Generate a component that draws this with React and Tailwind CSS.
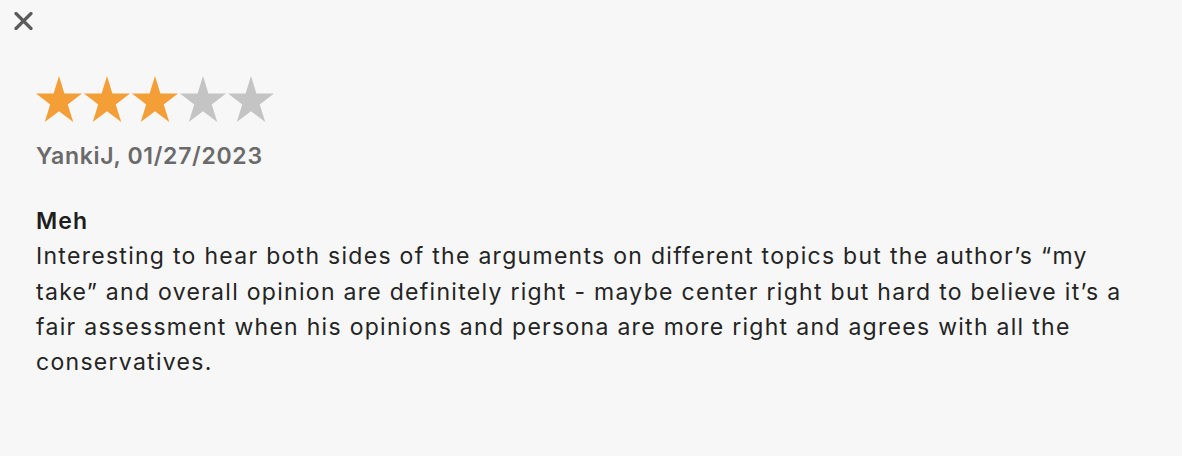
import React from 'react';

// five-point star, drawn in a 46x46 box
const Star = ({ filled }) => (
  <svg width="46" height="46" viewBox="0 0 46 46" className={filled ? 'text-[#f49e38]' : 'text-[#c4c4c4]'}>
    <path
      fill="currentColor"
      d="M23 0 L28.43 17.57 L46 17.57 L31.78 28.43 L37.22 46 L23 35.14 L8.78 46 L14.22 28.43 L0 17.57 L17.57 17.57 Z"
    />
  </svg>
);

const App = () => {
  const rating = 3;
  return (
    <div className="w-[1182px] h-[456px] bg-[#f7f7f7] font-['Inter','Helvetica',sans-serif] text-[#242424]">
      {/* close button */}
      <div className="pt-[12px] pl-[14px]">
        <svg width="19" height="18" viewBox="0 0 19 18" className="block text-[#5b5b5b]">
          <path d="M2 1.5 L17 16.5 M17 1.5 L2 16.5" stroke="currentColor" strokeWidth="3.2" strokeLinecap="round" />
        </svg>
      </div>

      <div className="pl-[36px] pr-[40px]">
        {/* stars */}
        <div className="flex gap-[2px] mt-[46px]">
          {[1, 2, 3, 4, 5].map((i) => (
            <Star key={i} filled={i <= rating} />
          ))}
        </div>

        <div className="mt-[17px] text-[23px] font-semibold tracking-[0.03em] text-[#6a6a6a] leading-[35px]">
          YankiJ, 01/27/2023
        </div>

        <div className="mt-[30px] text-[23px] font-semibold tracking-[0.05em] leading-[35.3px] text-[#1e1e1e]">Meh</div>
        <p className="text-[23px] tracking-[0.056em] leading-[35.3px]">
          Interesting to hear both sides of the arguments on different topics but the author’s “my take” and overall
          opinion are definitely right - maybe center right but hard to believe it’s a fair assessment when his opinions
          and persona are more right and agrees with all the conservatives.
        </p>
      </div>
    </div>
  );
};

export default App;
